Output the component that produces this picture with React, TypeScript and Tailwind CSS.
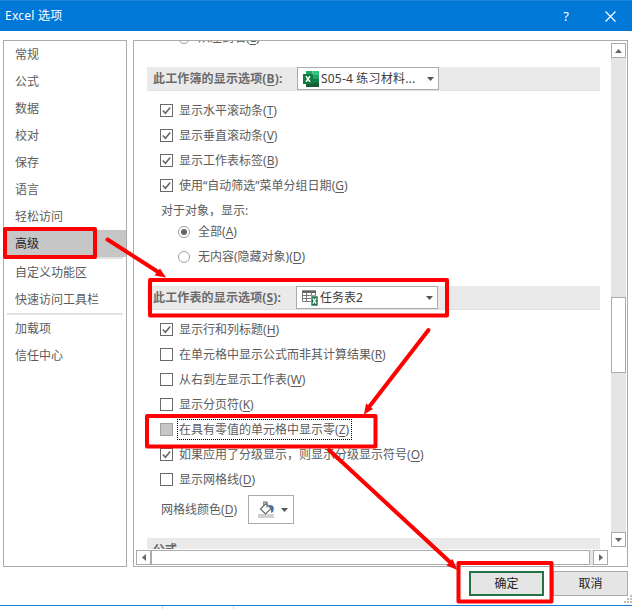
import type { ReactNode } from 'react';

const navGroups = [
    ['常规', '公式', '数据', '校对', '保存', '语言', '轻松访问', '高级'],
    ['自定义功能区', '快速访问工具栏'],
    ['加载项', '信任中心'],
];

const Key = ({ k }: { k: string }) => (
    <>
        (<span className="underline underline-offset-2">{k}</span>)
    </>
);

const CheckRow = ({ label, k, checked, focused }: { label: string; k: string; checked?: boolean; focused?: boolean }) => (
    <div className="flex h-[25px] items-center pl-[13px]">
        <span className={`flex h-[13px] w-[13px] shrink-0 items-center justify-center border ${focused ? 'border-[#a0a0a0] bg-[#c6c6c6]' : 'border-[#6a6a6a] bg-white'}`}>
            {checked && (
                <svg width="11" height="11" viewBox="0 0 11 11" fill="none" stroke="#666" strokeWidth="1.6">
                    <path d="M1.8 5.5 L4.4 8.2 L9.2 2.6" />
                </svg>
            )}
        </span>
        <span className={`ml-1 flex h-[21px] items-center border border-dotted pl-px pr-0.5 ${focused ? 'border-black' : 'border-transparent'}`}>
            <span className="whitespace-nowrap">{label}<Key k={k} /></span>
        </span>
    </div>
);

const RadioRow = ({ label, k, checked }: { label: string; k: string; checked?: boolean }) => (
    <div className="flex h-[25px] items-center pl-[31px]">
        <span className="flex h-3 w-3 items-center justify-center rounded-full border border-[#a0a0a0]">
            {checked && <span className="h-1.5 w-1.5 rounded-full bg-[#666]" />}
        </span>
        <span className="ml-2 whitespace-nowrap">{label}<Key k={k} /></span>
    </div>
);

const Section = ({ label, k, children }: { label: string; k: string; children: ReactNode }) => (
    <div className="flex h-6 w-[453px] items-start border-b border-[#e1e1e1] bg-[#eaeaea]">
        <span className="w-[149px] shrink-0 whitespace-nowrap pl-1.5 leading-[24px] font-bold tracking-[0.15px] text-[#6a6a6a]">
            {label}<Key k={k} />:
        </span>
        {children}
    </div>
);

const Select = ({ children }: { children: ReactNode }) => (
    <div className="flex h-[23px] w-[142px] items-center border border-[#ababab] bg-white pl-[5px] pr-1 text-[#3c3c3c]">
        {children}
        <svg className="ml-auto" width="7" height="4" viewBox="0 0 7 4" fill="#555">
            <path d="M0 0 H7 L3.5 4 Z" />
        </svg>
    </div>
);

const WorkbookIcon = () => (
    <svg className="mr-0.5 shrink-0" width="16" height="16" viewBox="0 0 16 16">
        <path d="M3 0 H9.5 V4 H3 Z" fill="#21a366" />
        <path d="M9.5 0 H16 V4 H9.5 Z" fill="#33c481" />
        <path d="M3 4 H9.5 V8 H3 Z" fill="#107c41" />
        <path d="M9.5 4 H16 V8 H9.5 Z" fill="#21a366" />
        <path d="M3 8 H16 V16 H3 Z" fill="#185c37" />
        <path d="M9.5 8 H16 V12 H9.5 Z" fill="#107c41" />
        <path d="M0 3 H10 V13 H0 Z" fill="#107c41" />
        <path d="M3 5.2 L7 10.8 M7 5.2 L3 10.8" stroke="#fff" strokeWidth="1.5" />
    </svg>
);

const SheetIcon = () => (
    <svg className="mr-0.5 shrink-0" width="16" height="16" viewBox="0 0 16 16">
        <path d="M0.5 1 H13.5 V11.5 H0.5 Z" fill="#fff" stroke="#777" />
        <path d="M0 0.5 H14 V3 H0 Z" fill="#666" />
        <path d="M0 5.5 H14 M0 8.5 H14 M4.5 2 V12 M9.5 2 V12" stroke="#777" />
        <path d="M9 6 H16 V16 H9 Z" fill="#217346" stroke="#fff" strokeWidth="0.6" />
        <path d="M10.9 8.4 L14.1 13.7 M14.1 8.4 L10.9 13.7" stroke="#fff" strokeWidth="1.3" />
    </svg>
);

const BucketIcon = () => (
    <svg width="17" height="17" viewBox="0 0 17 17" fill="none">
        <path d="M0 13 H16 V17 H0 Z" fill="#d0d0d0" />
        <path d="M12 4 C16 4 16.5 7 15 11 L13 12 V7 L10 5 Z" fill="#4472a8" />
        <path d="M2.5 8 L8 2.5 L13 7.5 L7.5 13 Z" fill="#fff" stroke="#666" strokeWidth="1.1" />
        <path d="M5.8 4.5 V1 H9 V6.5" stroke="#666" strokeWidth="1.1" />
    </svg>
);

const Annotations = () => (
    <svg className="pointer-events-none absolute inset-0" width="632" height="609" viewBox="0 0 632 609" fill="none" stroke="#ff0000" strokeWidth="4" strokeLinejoin="round" strokeLinecap="round">
        <rect x="5" y="229" width="90" height="28" />
        <rect x="150" y="280" width="297" height="35.5" />
        <rect x="147" y="416" width="228.5" height="30.5" />
        <rect x="458.5" y="563" width="93" height="38.5" />
        <path d="M107.5 239.5 L159 272.5" />
        <path d="M428.5 330 L369 407" />
        <path d="M329 450 L451 563" />
        <g fill="#ff0000" stroke="none">
            <path d="M166 277.5 L154.5 275.5 L160 268.5 Z" />
            <path d="M364 414.5 L366 403.5 L373 409 Z" />
            <path d="M457.5 570 L446.5 565.5 L452.5 559 Z" />
        </g>
    </svg>
);

const App = () => {
    return (
        <div className="relative flex h-[609px] w-[632px] flex-col overflow-hidden bg-white font-['Noto_Sans','Noto_Sans_CJK_SC',sans-serif] text-[12px] leading-[16px] text-[#5c5c5c]">
            {/* Title bar */}
            <div className="flex h-[31px] shrink-0 items-center border-t border-[#1a82d8] bg-[#0078d7] pl-[5px] text-white">
                <span className="tracking-[0.25px]">Excel 选项</span>
                <span className="ml-auto mr-[36px] text-[13px]">?</span>
                <svg className="mr-4" width="11" height="11" viewBox="0 0 11 11" stroke="#fff" strokeWidth="1.2">
                    <path d="M0.5 0.5 L10.5 10.5 M10.5 0.5 L0.5 10.5" />
                </svg>
            </div>

            <div className="mt-[9px] flex h-[527px] shrink-0 gap-1.5 pl-[3px]">
                {/* Categories */}
                <div className="w-[124px] border border-[#ababab]">
                    {navGroups.map((group, i) => (
                        <div key={i}>
                            {i > 0 && <div className="mx-[3px] h-0.5 bg-[#e1e2e5]" />}
                            {group.map((item) => (
                                <div key={item} className={`flex h-[27px] items-center pl-[11px] ${item === '高级' ? 'bg-[#c6c6c6] text-[#222]' : ''}`}>
                                    {item}
                                </div>
                            ))}
                        </div>
                    ))}
                </div>

                {/* Settings pane */}
                <div className="flex w-[495px] flex-col border border-[#ababab]">
                    <div className="flex h-[508px]">
                        <div className="h-[508px] w-[477px] overflow-hidden pl-[13px]">
                            <div className="-mt-4">
                                <RadioRow label="从左到右" k="L" />
                            </div>
                            <div className="mt-[17px]">
                                <Section label="此工作簿的显示选项" k="B">
                                    <div className="ml-px">
                                        <Select>
                                            <WorkbookIcon />
                                            <span className="whitespace-nowrap tracking-[0.2px]">S05-4 练习材料...</span>
                                        </Select>
                                    </div>
                                </Section>
                            </div>
                            <div className="mt-[7px]">
                                <CheckRow label="显示水平滚动条" k="T" checked />
                                <CheckRow label="显示垂直滚动条" k="V" checked />
                                <CheckRow label="显示工作表标签" k="B" checked />
                                <CheckRow label="使用“自动筛选”菜单分组日期" k="G" checked />
                            </div>
                            <div className="flex h-[21px] items-center pl-3.5 pt-1">对于对象，显示:</div>
                            <RadioRow label="全部" k="A" checked />
                            <RadioRow label="无内容(隐藏对象)" k="D" />
                            <div className="mt-[17px]">
                                <Section label="此工作表的显示选项" k="S">
                                    <Select>
                                        <SheetIcon />
                                        <span>任务表2</span>
                                    </Select>
                                </Section>
                            </div>
                            <div className="mt-[7px]">
                                <CheckRow label="显示行和列标题" k="H" checked />
                                <CheckRow label="在单元格中显示公式而非其计算结果" k="R" />
                                <CheckRow label="从右到左显示工作表" k="W" />
                                <CheckRow label="显示分页符" k="K" />
                                <CheckRow label="在具有零值的单元格中显示零" k="Z" focused />
                                <CheckRow label="如果应用了分级显示，则显示分级显示符号" k="O" checked />
                                <CheckRow label="显示网格线" k="D" />
                            </div>
                            <div className="mt-[3px] flex items-center pl-3.5">
                                <span className="w-[87px]">网格线颜色<Key k="D" /></span>
                                <div className="flex h-[29px] w-[46px] items-center border border-[#ababab] pl-[9px]">
                                    <BucketIcon />
                                    <svg className="ml-1.5" width="7" height="4" viewBox="0 0 7 4" fill="#555">
                                        <path d="M0 0 H7 L3.5 4 Z" />
                                    </svg>
                                </div>
                            </div>
                            <div className="mt-3.5 h-6 w-[453px] bg-[#eaeaea] pl-1.5 leading-[24px] font-bold text-[#666]">公式</div>
                        </div>

                        {/* Vertical scrollbar */}
                        <div className="mt-0.5 flex h-[504px] w-[15px] flex-col bg-[#e5e5e5]">
                            <div className="flex h-[15px] items-center justify-center border border-[#ababab] bg-white">
                                <svg width="7" height="4" viewBox="0 0 7 4" fill="#666"><path d="M0 4 H7 L3.5 0 Z" /></svg>
                            </div>
                            <div className="mt-[239px] h-[76px] border border-[#ababab] bg-white" />
                            <div className="mt-auto flex h-[15px] items-center justify-center border border-[#ababab] bg-white">
                                <svg width="7" height="4" viewBox="0 0 7 4" fill="#666"><path d="M0 0 H7 L3.5 4 Z" /></svg>
                            </div>
                        </div>
                    </div>

                    {/* Horizontal scrollbar */}
                    <div className="mt-px ml-0.5 flex h-[15px] w-[472px] bg-[#e5e5e5]">
                        <div className="flex w-[15px] items-center justify-center border border-[#ababab] bg-white">
                            <svg width="4" height="7" viewBox="0 0 4 7" fill="#666"><path d="M4 0 V7 L0 3.5 Z" /></svg>
                        </div>
                        <div className="w-[439px] border border-[#ababab] bg-white" />
                        <div className="ml-auto flex w-[15px] items-center justify-center border border-[#ababab] bg-white">
                            <svg width="4" height="7" viewBox="0 0 4 7" fill="#666"><path d="M0 0 V7 L4 3.5 Z" /></svg>
                        </div>
                    </div>
                </div>
            </div>

            {/* Footer buttons */}
            <div className="mt-1 flex h-[34px] shrink-0 justify-end gap-[9px] pr-1 text-[#222]">
                <button className="h-[25px] w-[75px] border-2 border-[#217346] bg-[#e5e5e5]">确定</button>
                <button className="h-[25px] w-[75px] border border-[#ababab] bg-[#e5e5e5]">取消</button>
            </div>
            <div className="flex h-1 shrink-0 border-t border-[#1a82d8]">
                <div className="ml-[162px] w-[72px] border-x border-[#d8d8d8]" />
            </div>

            {/* Resize grip */}
            <svg className="absolute right-0 bottom-[6px]" width="8" height="8" viewBox="0 0 8 8" fill="#bfbfbf">
                <path d="M6 0 H8 V2 H6 Z M3 3 H5 V5 H3 Z M6 3 H8 V5 H6 Z M0 6 H2 V8 H0 Z M3 6 H5 V8 H3 Z M6 6 H8 V8 H6 Z" />
            </svg>

            <Annotations />
        </div>
    );
};

export default App;
